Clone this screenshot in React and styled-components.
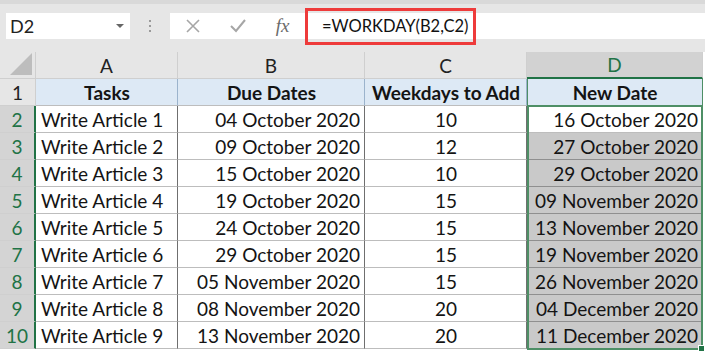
import React from "react";
import styled, { createGlobalStyle } from "styled-components";

const Global = createGlobalStyle`
  html, body {
    margin: 0;
    padding: 0;
    background: #ffffff;
  }
  body {
    font-family: "Lato", "Liberation Sans", sans-serif;
    width: 705px;
    height: 354px;
    overflow: hidden;
  }
`;

const GREEN = "#217346";

const Page = styled.div`
  display: flex;
  flex-direction: column;
  width: 705px;
  height: 354px;
  overflow: hidden;
  background: #ffffff;
`;

const Toolbar = styled.div`
  height: 52px;
  box-sizing: border-box;
  background: #e6e6e6;
  border-top: 4px solid #d9d9d9;
  display: flex;
  align-items: flex-start;
  padding: 9px 0 0 6px;
`;

const NameBox = styled.div`
  width: 124px;
  height: 26px;
  box-sizing: border-box;
  background: #fff;
  display: flex;
  align-items: center;
  justify-content: space-between;
  padding: 0 6px 0 4px;
  font-size: 18px;
  color: #222;
`;

const Caret = styled.span`
  width: 0;
  height: 0;
  border-left: 4px solid transparent;
  border-right: 4px solid transparent;
  border-top: 4px solid #666;
`;

const Grip = styled.div`
  width: 40px;
  height: 26px;
  display: flex;
  flex-direction: column;
  align-items: center;
  justify-content: center;
  gap: 3px;
  span {
    width: 2px;
    height: 2px;
    background: #9a9a9a;
  }
`;

const FormulaBar = styled.div`
  flex: 1;
  height: 26px;
  background: #fff;
  display: flex;
  align-items: center;
`;

const IconSlot = styled.div`
  width: 45px;
  height: 26px;
  display: flex;
  align-items: center;
  justify-content: center;
  color: #a6a6a6;
`;

const Fx = styled.span`
  font-family: "Liberation Serif", serif;
  font-style: italic;
  font-size: 19px;
  color: #6b6b6b;
`;

const Formula = styled.div`
  flex: none;
  font-size: 16.5px;
  color: #111;
  box-sizing: border-box;
  height: 37px;
  width: 171px;
  border: 3px solid #ee3b3b;
  display: flex;
  align-items: center;
  padding-left: 14px;
`;

const Sheet = styled.div`
  display: grid;
  grid-template-columns: 36px 142px 187px 162px 176px 2px;
  grid-auto-rows: 27px;
  position: relative;
`;

const Corner = styled.div`
  background: #e6e6e6;
  border-right: 1px solid #cfcfcf;
  border-bottom: 1px solid #cfcfcf;
  position: relative;
  &::after {
    content: "";
    position: absolute;
    right: 3px;
    bottom: 3px;
    width: 0;
    height: 0;
    border-left: 22px solid transparent;
    border-bottom: 22px solid #bdbdbd;
  }
`;

const ColHead = styled.div`
  box-sizing: border-box;
  background: ${(p) => (p.$active ? "#d2d2d2" : "#e6e6e6")};
  color: ${(p) => (p.$active ? GREEN : "#222")};
  border-right: 1px solid #cfcfcf;
  border-bottom: ${(p) => (p.$active ? `2px solid ${GREEN}` : "1px solid #cfcfcf")};
  display: flex;
  align-items: center;
  justify-content: center;
  font-size: 19px;
`;

const RowHead = styled.div`
  box-sizing: border-box;
  background: ${(p) => (p.$active ? "#d4d4d4" : "#e6e6e6")};
  color: ${(p) => (p.$active ? GREEN : "#222")};
  border-right: ${(p) => (p.$active ? `2px solid ${GREEN}` : "1px solid #cfcfcf")};
  border-bottom: 1px solid #cfcfcf;
  display: flex;
  align-items: center;
  justify-content: center;
  font-size: 19px;
`;

const Cell = styled.div`
  box-sizing: border-box;
  background: ${(p) => (p.$head ? "#dde9f5" : p.$shade ? "#c9c9c9" : "#fff")};
  font-weight: ${(p) => (p.$head ? 700 : 400)};
  font-size: 19px;
  color: #141414;
  border-right: 1px solid ${(p) => (p.$sel ? "#4e8f66" : p.$head ? "#9bb3cc" : "#6f6f6f")};
  border-bottom: 1px solid ${(p) => (p.$shade ? "#8f8f8f" : "#bdbdbd")};
  box-shadow: ${(p) => (p.$sel ? "inset 1px 0 0 #4e8f66" : "none")};
  display: flex;
  align-items: center;
  justify-content: ${(p) =>
    p.$align === "left" ? "flex-start" : p.$align === "right" ? "flex-end" : "center"};
  padding: 0 4px 0 5px;
  white-space: nowrap;
  overflow: hidden;
`;

const Edge = styled.div`
  background: #fff;
`;

const Selection = styled.div`
  position: absolute;
  left: 527px;
  top: 53px;
  width: 176px;
  height: 245px;
  box-sizing: border-box;
  border: 2px solid #4e8f66;
  pointer-events: none;
  &::after {
    content: "";
    position: absolute;
    right: -4px;
    bottom: -4px;
    width: 5px;
    height: 5px;
    background: ${GREEN};
    border: 1px solid #fff;
  }
`;

const rows = [
  ["Write Article 1", "04 October 2020", "10", "16 October 2020"],
  ["Write Article 2", "09 October 2020", "12", "27 October 2020"],
  ["Write Article 3", "15 October 2020", "10", "29 October 2020"],
  ["Write Article 4", "19 October 2020", "15", "09 November 2020"],
  ["Write Article 5", "24 October 2020", "15", "13 November 2020"],
  ["Write Article 6", "29 October 2020", "15", "19 November 2020"],
  ["Write Article 7", "05 November 2020", "15", "26 November 2020"],
  ["Write Article 8", "08 November 2020", "20", "04 December 2020"],
  ["Write Article 9", "13 November 2020", "20", "11 December 2020"],
];

export default function App() {
  return (
    <Page>
      <Global />
      <Toolbar>
        <NameBox>
          D2
          <Caret />
        </NameBox>
        <Grip>
          <span />
          <span />
          <span />
        </Grip>
        <FormulaBar>
          <IconSlot>
            <svg width="14" height="14" viewBox="0 0 14 14">
              <path d="M1 1 L13 13 M13 1 L1 13" stroke="#a6a6a6" strokeWidth="1.6" fill="none" />
            </svg>
          </IconSlot>
          <IconSlot>
            <svg width="16" height="14" viewBox="0 0 16 14">
              <path d="M1 7 L6 12 L15 1" stroke="#a6a6a6" strokeWidth="2" fill="none" />
            </svg>
          </IconSlot>
          <IconSlot>
            <Fx>fx</Fx>
          </IconSlot>
          <Formula>=WORKDAY(B2,C2)</Formula>
        </FormulaBar>
      </Toolbar>
      <Sheet>
        <Corner />
        <ColHead>A</ColHead>
        <ColHead>B</ColHead>
        <ColHead>C</ColHead>
        <ColHead $active>D</ColHead>
        <Edge />

        <RowHead>1</RowHead>
        <Cell $head>Tasks</Cell>
        <Cell $head>Due Dates</Cell>
        <Cell $head>Weekdays to Add</Cell>
        <Cell $head $sel>New Date</Cell>
        <Edge />

        {rows.map((r, i) => (
          <React.Fragment key={i}>
            <RowHead $active>{i + 2}</RowHead>
            <Cell $align="left">{r[0]}</Cell>
            <Cell $align="right">{r[1]}</Cell>
            <Cell>{r[2]}</Cell>
            <Cell $align="right" $shade={i > 0}>
              {r[3]}
            </Cell>
            <Edge />
          </React.Fragment>
        ))}
        <Selection />
      </Sheet>
    </Page>
  );
}
